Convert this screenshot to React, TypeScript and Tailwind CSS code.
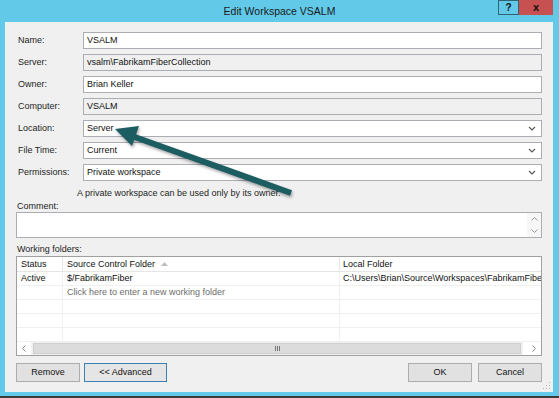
import React from 'react';

const font = { fontFamily: '"Liberation Sans", Arial, sans-serif' };

function Chevron() {
  return (
    <svg width="8" height="5" viewBox="0 0 8 5" className="shrink-0">
      <path d="M1 1 L4 4 L7 1" fill="none" stroke="#555" strokeWidth="1.1" />
    </svg>
  );
}

function Field({ label, value, disabled, select }: { label: string; value: string; disabled?: boolean; select?: boolean }) {
  return (
    <div className="flex items-center h-[17px]">
      <div className="w-[78px] pl-[13px] text-[9px] text-[#1e1e1e]">{label}</div>
      <div
        className={`w-[459px] h-[17px] border border-[#abadb3] flex items-center pl-[3px] pr-[5px] text-[9px] text-[#111] ${
          disabled ? 'bg-[#f0f0f0]' : 'bg-white'
        }`}
      >
        <span className="flex-1">{value}</span>
        {select && <Chevron />}
      </div>
    </div>
  );
}

function Row({ status, source, local, hint }: { status?: string; source?: string; local?: string; hint?: boolean }) {
  return (
    <div className="flex h-[14px] border-b border-[#f0f0f0] text-[9px] leading-[13px]">
      <div className="w-[46px] pl-[4px] border-r border-[#f0f0f0]">{status}</div>
      <div className={`w-[277px] pl-[4px] border-r border-[#f0f0f0] ${hint ? 'text-[#6d6d6d]' : ''}`}>{source}</div>
      <div className="flex-1 pl-[3px] whitespace-nowrap overflow-hidden">{local}</div>
    </div>
  );
}

export default function App() {
  return (
    <div className="relative w-[559px] h-[398px] bg-[#62c9e9] overflow-hidden" style={font}>
      {/* Title bar */}
      <div className="relative h-[22px] flex items-center justify-center">
        <span className="text-[10.5px] text-[#1a1a1a] pt-[1px]">Edit Workspace VSALM</span>
        <div className="absolute top-0 right-[6px] flex">
          <div className="w-[21px] h-[15px] border border-[#2f6474] flex items-center justify-center text-[10px] font-bold text-[#111]">
            ?
          </div>
          <div className="w-[34px] h-[15px] bg-[#c75050] flex items-center justify-center text-[11px] font-bold text-[#111] leading-none">
            x
          </div>
        </div>
      </div>

      {/* Body */}
      <div className="relative ml-[5px] w-[548px] h-[370px] bg-[#f0f0f0] pt-[10px] flex flex-col">
        <div className="flex flex-col gap-[5px]">
          <Field label="Name:" value="VSALM" />
          <Field label="Server:" value="vsalm\FabrikamFiberCollection" disabled />
          <Field label="Owner:" value="Brian Keller" />
          <Field label="Computer:" value="VSALM" disabled />
          <Field label="Location:" value="Server" select />
          <Field label="File Time:" value="Current" select />
          <Field label="Permissions:" value="Private workspace" select />
        </div>

        <div className="mt-[5px] h-[14px] pl-[72px] text-[9px] leading-[14px] text-[#1e1e1e]">
          A private workspace can be used only by its owner.
        </div>

        <div className="h-[12px] pl-[12px] text-[9px] leading-[12px] text-[#1e1e1e]">Comment:</div>
        <div className="ml-[11px] w-[526px] h-[26px] bg-white border border-[#abadb3] flex justify-end">
          <div className="w-[14px] h-full bg-[#f7f7f7] flex flex-col items-center justify-around">
            <svg width="7" height="4" viewBox="0 0 7 4">
              <path d="M0.5 3.5 L3.5 0.5 L6.5 3.5" fill="none" stroke="#999" strokeWidth="1" />
            </svg>
            <svg width="7" height="4" viewBox="0 0 7 4">
              <path d="M0.5 0.5 L3.5 3.5 L6.5 0.5" fill="none" stroke="#999" strokeWidth="1" />
            </svg>
          </div>
        </div>

        <div className="h-[18px] pl-[12px] pt-[5px] text-[9px] leading-[12px] text-[#1e1e1e]">Working folders:</div>

        {/* Working folders grid */}
        <div className="ml-[11px] w-[526px] h-[100px] bg-white border border-[#a0a0a0] flex flex-col text-[#111]">
          <div className="flex h-[15px] border-b border-[#e5e5e5] text-[9px] leading-[14px]">
            <div className="w-[46px] pl-[4px] border-r border-[#e5e5e5]">Status</div>
            <div className="w-[277px] pl-[4px] border-r border-[#e5e5e5] flex items-center gap-[6px]">
              <span>Source Control Folder</span>
              <svg width="7" height="4" viewBox="0 0 7 4">
                <path d="M0 4 L3.5 0 L7 4 Z" fill="#bdbdbd" />
              </svg>
            </div>
            <div className="flex-1 pl-[3px]">Local Folder</div>
          </div>
          <Row status="Active" source="$/FabrikamFiber" local="C:\Users\Brian\Source\Workspaces\FabrikamFiber" />
          <Row source="Click here to enter a new working folder" hint />
          <Row />
          <Row />
          <Row />
          <div className="h-[13px] flex items-stretch bg-[#f0f0f0]">
            <div className="w-[14px] bg-white flex items-center justify-center">
              <svg width="4" height="7" viewBox="0 0 4 7">
                <path d="M3.5 0.5 L0.5 3.5 L3.5 6.5" fill="none" stroke="#888" strokeWidth="1" />
              </svg>
            </div>
            <div className="flex-1 mx-[2px] my-[1px] bg-[#dcdcdc] border border-[#cfcfcf] flex items-center justify-center">
              <div className="flex gap-[1px]">
                <div className="w-px h-[5px] bg-[#777]" />
                <div className="w-px h-[5px] bg-[#777]" />
                <div className="w-px h-[5px] bg-[#777]" />
              </div>
            </div>
            <div className="w-[4px] bg-white" />
            <div className="w-[14px] bg-white flex items-center justify-center">
              <svg width="4" height="7" viewBox="0 0 4 7">
                <path d="M0.5 0.5 L3.5 3.5 L0.5 6.5" fill="none" stroke="#888" strokeWidth="1" />
              </svg>
            </div>
          </div>
        </div>

        {/* Buttons */}
        <div className="mt-[7px] flex pl-[11px] text-[9px] text-[#111]">
          <button className="w-[64px] h-[19px] bg-[#e1e1e1] border border-[#adadad]">Remove</button>
          <button className="ml-[4px] w-[83px] h-[19px] bg-[#e5e5e5] border border-[#3c7fb1]">&lt;&lt; Advanced</button>
          <div className="flex-1" />
          <button className="w-[64px] h-[19px] bg-[#e1e1e1] border border-[#adadad]">OK</button>
          <button className="ml-[6px] mr-[11px] w-[64px] h-[19px] bg-[#e1e1e1] border border-[#adadad]">Cancel</button>
        </div>

        {/* resize grip */}
        <svg className="absolute right-[2px] bottom-[2px]" width="8" height="8" viewBox="0 0 8 8">
          <rect x="6" y="0" width="1" height="1" fill="#b8b8b8" />
          <rect x="3" y="3" width="1" height="1" fill="#b8b8b8" />
          <rect x="6" y="3" width="1" height="1" fill="#b8b8b8" />
          <rect x="0" y="6" width="1" height="1" fill="#b8b8b8" />
          <rect x="3" y="6" width="1" height="1" fill="#b8b8b8" />
          <rect x="6" y="6" width="1" height="1" fill="#b8b8b8" />
        </svg>
      </div>

      <div className="mt-[4px] h-[2px] bg-[#3b3b3b]" />

      {/* Callout arrow */}
      <svg
        className="absolute inset-0 pointer-events-none"
        width="559"
        height="398"
        viewBox="0 0 559 398"
        style={{ filter: 'drop-shadow(1px 2px 1.5px rgba(0,0,0,0.35))' }}
      >
        <line x1="291" y1="193" x2="132" y2="136" stroke="#1c5d62" strokeWidth="6" />
        <polygon points="115,129 139,126 132,146" fill="#1c5d62" />
      </svg>
    </div>
  );
}
